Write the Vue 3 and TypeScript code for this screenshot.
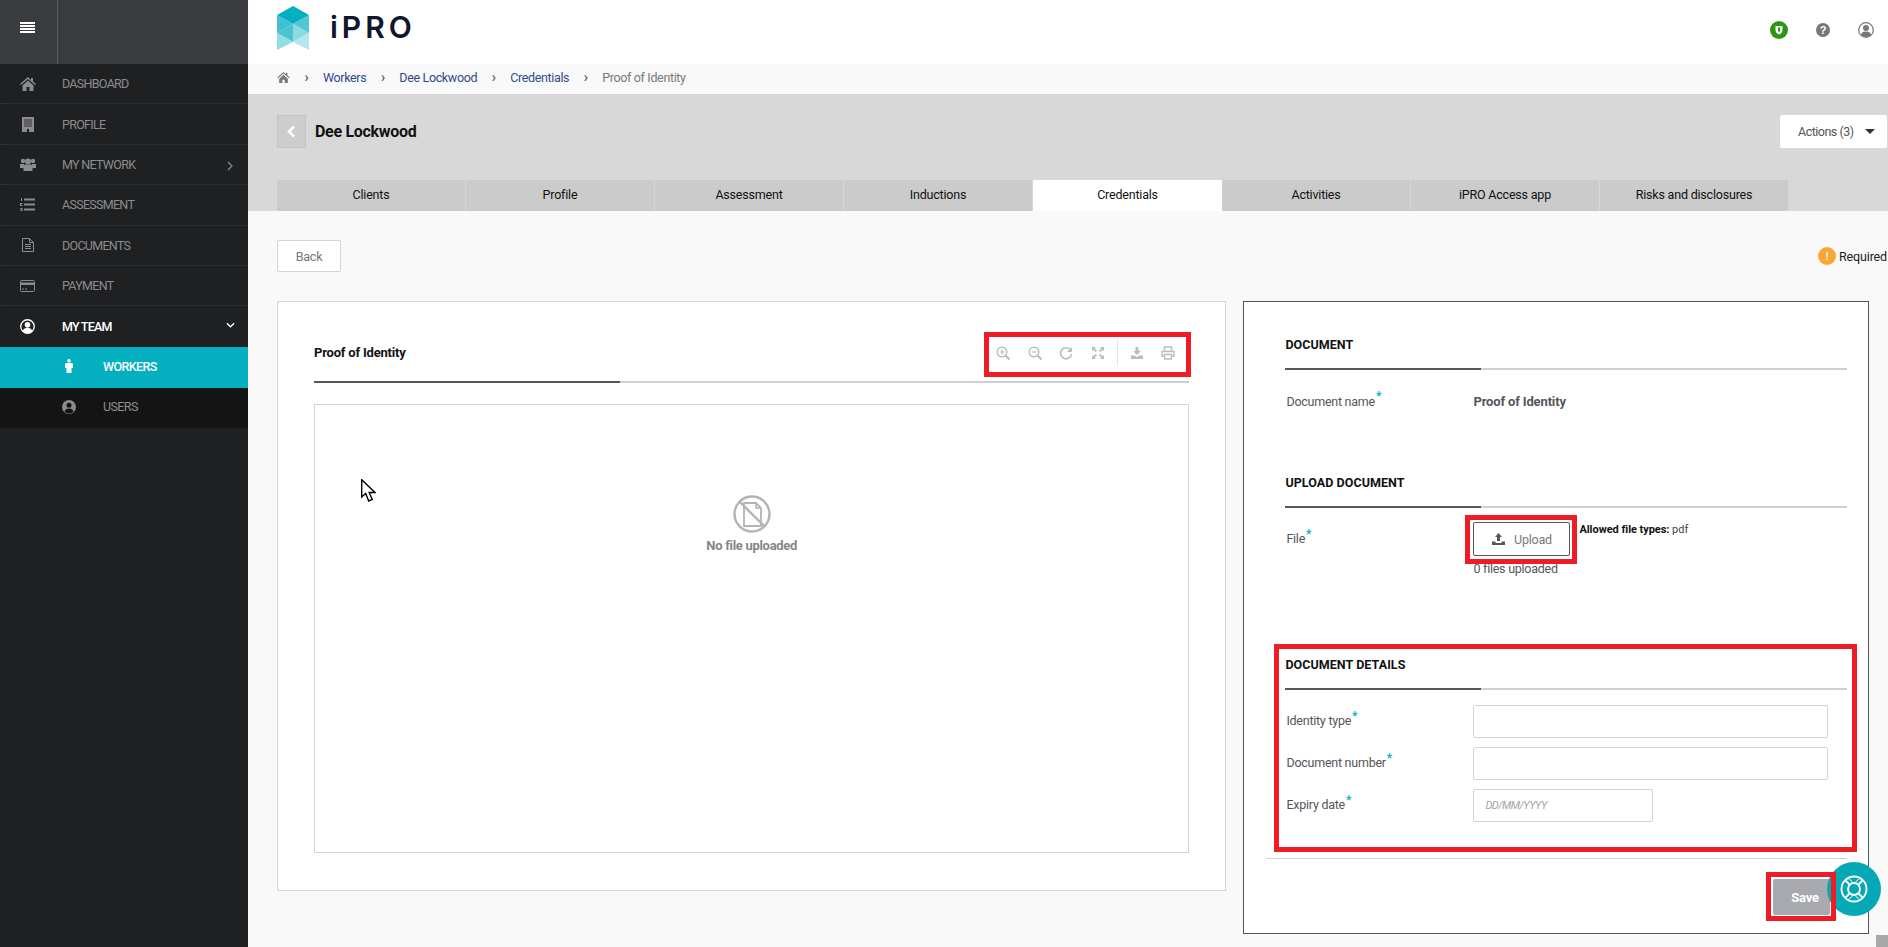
<script setup lang="ts">
const nav = [
  { label: 'DASHBOARD', icon: 'home' },
  { label: 'PROFILE', icon: 'profile' },
  { label: 'MY NETWORK', icon: 'network', arrow: 'right' },
  { label: 'ASSESSMENT', icon: 'list' },
  { label: 'DOCUMENTS', icon: 'doc' },
  { label: 'PAYMENT', icon: 'card' },
]
const tabs = ['Clients', 'Profile', 'Assessment', 'Inductions', 'Credentials', 'Activities', 'iPRO Access app', 'Risks and disclosures']
const crumbs = ['Workers', 'Dee Lockwood', 'Credentials']
</script>

<template>
  <div class="app">
    <aside class="side">
      <div class="side-top">
        <div class="burger"><i></i><i></i><i></i><i></i></div>
      </div>
      <div v-for="n in nav" :key="n.label" class="nav-row">
        <span class="nav-ico">
          <svg v-if="n.icon === 'home'" viewBox="0 0 16 14" width="16" height="14"><path d="M8 0 0 7l1 1 7-6 7 6 1-1-3-2.600V1h-2v2L8 0ZM2.500 8.500V14H6.500V10h3v4H13.500V8.500L8 3.500Z" fill="currentColor"/></svg>
          <svg v-else-if="n.icon === 'profile'" viewBox="0 0 12 15" width="12" height="15"><path d="M0 0h12v15H0Z" fill="currentColor"/><path d="M2 3h8M2 5h8M2 7h8M2 9h8" stroke="#1f2022" stroke-width=".8"/><path d="M5 12h2v3H5Z" fill="#1f2022"/></svg>
          <svg v-else-if="n.icon === 'network'" viewBox="0 0 16 13" width="16" height="13"><circle cx="3" cy="3" r="2.200" fill="currentColor"/><circle cx="13" cy="3" r="2.200" fill="currentColor"/><circle cx="8" cy="3.500" r="3" fill="currentColor"/><path d="M0 6h4v4H0ZM12 6h4v4h-4Z" fill="currentColor"/><path d="M3.500 8c0-1 1-1.500 2-1.500h5c1 0 2 .5 2 1.500v5h-9Z" fill="currentColor"/></svg>
          <svg v-else-if="n.icon === 'list'" viewBox="0 0 15 13" width="15" height="13"><path d="M4 1.500h11M4 6.500h11M4 11.500h11" stroke="currentColor" stroke-width="1.800"/><path d="M1 0h1v3H1ZM0 5h2.500v1H1v1h1.500v1H0ZM0 10h2.500v3H0v-.8h1.500v-.4H.6V11.200h.9v-.4H0Z" fill="currentColor"/></svg>
          <svg v-else-if="n.icon === 'doc'" viewBox="0 0 12 14" width="12" height="14"><path d="M.5.500h7l4 4v9H.5Z M7.500.5v4h4M3 6.500h6M3 8.500h6M3 10.500h6" fill="none" stroke="currentColor"/></svg>
          <svg v-else viewBox="0 0 15 12" width="15" height="12"><rect x=".5" y=".5" width="14" height="11" rx="1" fill="none" stroke="currentColor"/><path d="M1 2.500h13v2.500H1Z" fill="currentColor"/><path d="M2 9h2M5 9h2" stroke="currentColor"/></svg>
        </span>
        <span>{{ n.label }}</span>
        <svg v-if="n.arrow" class="nav-arrow" viewBox="0 0 6 10" width="6" height="10"><path d="m1 1 4 4-4 4" fill="none" stroke="currentColor" stroke-width="1.200"/></svg>
      </div>
      <div class="nav-row team">
        <span class="nav-ico">
          <svg viewBox="0 0 16 16" width="15" height="15"><circle cx="8" cy="8" r="7.200" fill="none" stroke="#fff" stroke-width="1.400"/><circle cx="8" cy="6.200" r="3" fill="#fff"/><path d="M3 13c.5-3 3-3.500 5-3.500s4.500.5 5 3.500a7 7 0 0 1-10 0Z" fill="#fff"/></svg>
        </span>
        <span>MY TEAM</span>
        <svg class="nav-arrow down" viewBox="0 0 10 6" width="9" height="6"><path d="m1 1 4 4 4-4" fill="none" stroke="#fff" stroke-width="1.500"/></svg>
      </div>
      <div class="sub-row active">
        <span class="sub-ico">
          <svg viewBox="0 0 8 14" width="8" height="14"><circle cx="4" cy="1.800" r="1.800" fill="#fff"/><path d="M1 4h6l1 1v4H6.500v5h-5V9H0V5Z" fill="#fff"/></svg>
        </span>
        <span>WORKERS</span>
      </div>
      <div class="sub-row">
        <span class="sub-ico">
          <svg viewBox="0 0 14 14" width="14" height="14"><circle cx="7" cy="7" r="7" fill="#8a8a8a"/><circle cx="7" cy="5.200" r="2.500" fill="#141415"/><path d="M2.500 11.500C3 9.500 5 8.500 7 8.500s4 1 4.500 3a6 6 0 0 1-9 0Z" fill="#141415"/></svg>
        </span>
        <span>USERS</span>
      </div>
    </aside>

    <main class="main">
      <header class="top">
        <svg class="logo" viewBox="0 0 32 44" width="32" height="44">
          <path d="M16 0 32 9 16 18 0 9Z" fill="#04afc0"/>
          <path d="M0 9 16 18 0 27Z" fill="#3fc1cf"/>
          <path d="M32 9 16 18 32 27Z" fill="#52c6d2"/>
          <path d="M0 27 16 18V36L0 27Z" fill="#4cc3d0"/>
          <path d="M16 18 32 27 16 36Z" fill="#8bd9e1"/>
          <path d="M0 27 16 36 0 44Z" fill="#93dde5"/>
          <path d="M32 27 16 36 32 44Z" fill="#b5e6eb"/>
        </svg>
        <span class="brand">iPRO</span>
        <div class="top-icons">
          <svg viewBox="0 0 18 18" width="18" height="18"><circle cx="9" cy="9" r="9" fill="#2c9610"/><path d="M5.500 5h7v4c0 2-1.500 3.500-3.500 4.500C7 12.500 5.500 11 5.500 9Z" fill="#fff"/><path d="M8 6.500h2V10l-1 1-1-1Z" fill="#2c9610"/></svg>
          <svg viewBox="0 0 14 14" width="14" height="14"><circle cx="7" cy="7" r="7" fill="#77787c"/><text x="7" y="11" text-anchor="middle" class="qm">?</text></svg>
          <svg viewBox="0 0 16 16" width="16" height="16"><circle cx="8" cy="8" r="7.300" fill="#fff" stroke="#77787c" stroke-width="1.200"/><circle cx="8" cy="6" r="3" fill="#77787c"/><path d="M3 13c.5-3 3-3.500 5-3.500s4.500.5 5 3.500a7 7 0 0 1-10 0Z" fill="#77787c"/></svg>
        </div>
      </header>

      <nav class="crumbs">
        <svg viewBox="0 0 16 14" width="13" height="11"><path d="M8 0 0 7l1 1 7-6 7 6 1-1-3-2.600V1h-2v2L8 0ZM2.500 8.500V14H6.500V10h3v4H13.500V8.500L8 3.500Z" fill="#77787c"/></svg>
        <template v-for="c in crumbs" :key="c">
          <span class="sep">›</span>
          <a>{{ c }}</a>
        </template>
        <span class="sep">›</span>
        <span class="cur">Proof of Identity</span>
      </nav>

      <section class="head">
        <div class="head-row">
          <button class="back-sq">
            <svg viewBox="0 0 9 13" width="9" height="13"><path d="M7 1.500 2 6.500l5 5" fill="none" stroke="#fff" stroke-width="2.600"/></svg>
          </button>
          <h1>Dee Lockwood</h1>
          <button class="actions">Actions (3)<i class="caret"></i></button>
        </div>
        <div class="tabs">
          <div v-for="t in tabs" :key="t" class="tab" :class="{ on: t === 'Credentials' }">{{ t }}</div>
        </div>
      </section>

      <section class="content">
        <div class="bar">
          <button class="back">Back</button>
          <div class="req"><span class="req-dot">!</span>Required</div>
        </div>
        <div class="panels">
          <div class="viewer-panel">
            <div class="viewer-head">
              <span class="viewer-title">Proof of Identity</span>
              <div class="tools">
                <svg viewBox="0 0 14 14" width="14" height="14"><circle cx="6" cy="6" r="4.800" fill="none" stroke="#bcbcbc" stroke-width="1.500"/><path d="m9.500 9.500 4 4" stroke="#bcbcbc" stroke-width="2"/><path d="M3.500 6h5M6 3.500v5" stroke="#bcbcbc" stroke-width="1.200"/></svg>
                <svg viewBox="0 0 14 14" width="14" height="14"><circle cx="6" cy="6" r="4.800" fill="none" stroke="#bcbcbc" stroke-width="1.500"/><path d="m9.500 9.500 4 4" stroke="#bcbcbc" stroke-width="2"/><path d="M3.500 6h5" stroke="#bcbcbc" stroke-width="1.200"/></svg>
                <svg viewBox="0 0 14 14" width="14" height="14"><path d="M11.500 4A5.500 5.500 0 1 0 12.500 8" fill="none" stroke="#bcbcbc" stroke-width="1.700"/><path d="M13 1v5H8Z" fill="#bcbcbc"/></svg>
                <svg viewBox="0 0 14 14" width="14" height="14"><path d="M1 1h4L3.700 2.300 6 4.600 4.600 6 2.300 3.700 1 5ZM13 1v4l-1.300-1.300L9.400 6 8 4.600l2.300-2.300L9 1ZM1 13V9l1.300 1.300L4.600 8 6 9.400l-2.300 2.300L5 13ZM13 13H9l1.300-1.300L8 9.400 9.400 8l2.300 2.300L13 9Z" fill="#bcbcbc"/></svg>
                <span class="tool-sep"></span>
                <svg viewBox="0 0 14 14" width="14" height="14"><path d="M5.500 1h3v4H11L7 9 3 5h2.500ZM1 9.500h3.500L7 11l2.500-1.500H13V13H1Z" fill="#bcbcbc"/></svg>
                <svg viewBox="0 0 14 14" width="14" height="14"><path d="M3.500 5V1h7v4M3.500 10H1V5.500h12V10h-2.500M3.500 8.500h7v4.500h-7Z" fill="none" stroke="#bcbcbc" stroke-width="1.400"/></svg>
              </div>
            </div>
            <div class="rule"><b class="rule-dark wide"></b></div>
            <div class="viewer">
              <svg viewBox="0 0 38 38" width="38" height="38"><circle cx="19" cy="19" r="17.500" fill="none" stroke="#b4b4b4" stroke-width="2.400"/><path d="M11 8h12l5 5v18H11Z" fill="none" stroke="#b4b4b4" stroke-width="1.800"/><path d="M23 8v5h5" fill="none" stroke="#b4b4b4" stroke-width="1.500"/><path d="M7 7l24 24" stroke="#b4b4b4" stroke-width="2.400"/></svg>
              <span class="none">No file uploaded</span>
            </div>
          </div>

          <form class="form-panel">
            <div class="form-body">
              <h2>DOCUMENT</h2>
              <div class="rule"><b class="rule-dark"></b></div>
              <div class="row doc-row">
                <label>Document name<sup>*</sup></label>
                <strong>Proof of Identity</strong>
              </div>

              <h2 class="up-h">UPLOAD DOCUMENT</h2>
              <div class="rule"><b class="rule-dark"></b></div>
              <div class="up-row">
                <label>File<sup>*</sup></label>
                <button type="button" class="upload">
                  <svg viewBox="0 0 13 12" width="13" height="12"><path d="M6.500 0 10 4H8v4H5V4H3ZM0 8.500h3.500V10h6V8.500H13V12H0Z" fill="#55575c"/></svg>
                  Upload
                </button>
                <span class="types"><b>Allowed file types:</b> pdf</span>
              </div>
              <div class="files">0 files uploaded</div>

              <h2 class="det-h">DOCUMENT DETAILS</h2>
              <div class="rule"><b class="rule-dark"></b></div>
              <div class="fields">
                <label>Identity type<sup>*</sup></label><div class="inp"></div>
                <label>Document number<sup>*</sup></label><div class="inp"></div>
                <label>Expiry date<sup>*</sup></label><div class="inp date">DD/MM/YYYY</div>
              </div>
            </div>
            <div class="foot">
              <button type="button" class="save">Save</button>
            </div>
          </form>
        </div>
      </section>
    </main>

    <div class="mark m-tools"></div>
    <div class="mark m-upload"></div>
    <div class="mark m-details"></div>
    <div class="mark m-save"></div>

    <div class="help">
      <svg viewBox="0 0 30 30" width="30" height="30"><g fill="none" stroke="#fff" stroke-width="1.800"><circle cx="15" cy="15" r="12.500"/><circle cx="15" cy="15" r="6"/><path d="m6 6 5 5M24 6l-5 5M6 24l5-5M24 24l-5-5"/><path d="M9 4l4.500 4M21 4l-4.500 4M9 26l4.500-4M21 26l-4.500-4" stroke-width="1"/></g></svg>
    </div>
    <div class="corner"></div>

    <svg class="cursor" viewBox="0 0 15 24" width="15" height="24"><path d="M.7.700V18l4-3.500 3 7.500 3.500-1.500-3-7H14Z" fill="#fff" stroke="#000" stroke-width="1.400"/></svg>
  </div>
</template>

<style>
html, body { margin: 0; height: 100%; overflow: hidden; }
</style>

<style scoped>
.app {
  position: relative;
  display: flex;
  height: 947px;
  overflow: hidden;
  font-family: Roboto, "Liberation Sans", sans-serif;
  font-size: 12.500px;
  letter-spacing: -.25px;
  color: #444;
  background: repeating-conic-gradient(#fdfdfd 0 25%, #f5f5f5 0 50%) 0 0 / 2px 2px;
}
button { font-family: inherit; letter-spacing: inherit; }

.side { width: 248px; flex: none; background: #1f2022; }
.side-top { height: 64px; background: #3a3b3f; display: flex; }
.burger {
  width: 55px; border-right: 1px solid #5c5d61;
  display: flex; flex-direction: column; justify-content: center; align-items: center; gap: 1px;
  padding-right: 2px; padding-bottom: 10px; box-sizing: content-box;
  height: 54px;
}
.burger i { width: 15px; height: 2px; background: #fff; display: block; }
.nav-row {
  height: 40.400px; box-sizing: border-box;
  display: flex; align-items: center;
  color: #8b8c8e; font-size: 12.500px; letter-spacing: -.7px;
  border-bottom: 1px dotted #38393b;
  position: relative;
}
.nav-ico { width: 62px; flex: none; display: flex; justify-content: center; padding-right: 7px; box-sizing: border-box; }
.nav-arrow { position: absolute; right: 15px; top: 16px; }
.team { color: #fff; font-weight: 500; border-bottom: 0; letter-spacing: -.8px; }
.team .down { right: 13px; top: 16px; }
.sub-row {
  height: 40.500px; display: flex; align-items: center; box-sizing: border-box; padding-bottom: 2px;
  color: #8d8e90; background: #141415; font-size: 12.500px; letter-spacing: -.6px;
}
.sub-row.active { background: #04afc0; color: #fff; font-weight: 500; height: 41px; }
.sub-ico { width: 103px; flex: none; display: flex; justify-content: center; padding-left: 48px; padding-right: 13px; box-sizing: border-box; }

.main { width: 1640px; flex: none; display: flex; flex-direction: column; }
.top { height: 64px; background: #fff; display: flex; align-items: center; padding-left: 29px; }
.logo { margin-top: -8px; margin-right: 21px; }
.brand {
  font-family: Inter, sans-serif; font-size: 30px; font-weight: 600;
  letter-spacing: 4px; color: #12162b; margin-top: -10px;
}
.top-icons { margin-left: auto; display: flex; align-items: center; gap: 28px; padding-right: 14px; margin-top: -5px; }
.qm { font: 700 11px "Liberation Sans", sans-serif; fill: #fff; }

.crumbs { height: 30px; display: flex; align-items: center; padding: 0 0 3px 29px; box-sizing: border-box; font-size: 12.500px; letter-spacing: -.35px; }
.crumbs a { color: #2f4a8a; }
.crumbs .sep { color: #444; width: 33px; text-align: center; font-size: 14px; margin: 0 0 2px; }
.crumbs svg { margin-right: 0; }
.crumbs .cur { color: #77787c; }

.head { height: 117px; background: #d8d8d8; padding-left: 29px; box-sizing: border-box; display: flex; flex-direction: column; }
.head-row { display: flex; align-items: center; height: 33px; margin-top: 21px; }
.back-sq {
  width: 29px; height: 33px; padding: 0; background: #cdcdcd; border: 1px solid #c4c4c4;
  display: flex; align-items: center; justify-content: center; margin-right: 9px;
}
h1 { margin: 0; font-size: 16px; font-weight: 700; color: #111; letter-spacing: -.3px; }
.actions {
  margin-left: auto; margin-right: 1px; width: 107px; height: 33px; border: 0; background: #fff; border-radius: 2px;
  font-size: 12.500px; letter-spacing: -.5px; color: #555; display: flex; align-items: center; padding: 0 0 0 18px;
}
.caret { margin-left: 11px; border: 5px solid transparent; border-top: 5px solid #333; border-bottom: 0; }
.tabs { display: flex; margin-top: 32px; height: 31px; }
.tab {
  width: 189px; box-sizing: border-box; background: #cbcbcb; color: #111; padding-bottom: 2px;
  display: flex; align-items: center; justify-content: center; font-size: 12.500px; letter-spacing: -.2px;
  border-right: 1px solid #d6d6d6;
}
.tab.on { background: #fff; border-right: 0; }

.content { padding: 29px 19px 0 29px; }
.bar { display: flex; justify-content: space-between; align-items: center; height: 32px; margin-bottom: 29px; margin-right: -19px; }
.back {
  width: 64px; height: 32px; background: #fff; border: 1px solid #d4d4d6; border-radius: 2px;
  color: #77787c; font-size: 12.500px; padding: 0;
}
.req { display: flex; align-items: center; gap: 3px; color: #222; font-size: 12.500px; margin-right: 1px; letter-spacing: -.15px; }
.req-dot {
  width: 18px; height: 18px; border-radius: 50%; background: #f8a832; color: #fff; font-size: 10px; font-weight: 700;
  display: flex; align-items: center; justify-content: center;
}

.panels { display: flex; gap: 17px; align-items: flex-start; }
.viewer-panel {
  width: 950px; height: 590px; box-sizing: border-box; background: #fff; border: 1px solid #d4d4d6;
  padding: 0 36px 0 36px;
}
.viewer-head { display: flex; justify-content: space-between; align-items: center; height: 79px; padding-top: 22px; box-sizing: border-box; }
.viewer-title { font-size: 13px; font-weight: 700; color: #111; letter-spacing: -.2px; }
.tools { display: flex; align-items: center; gap: 17.500px; padding-right: 14px; margin-top: 0; }
.tool-sep { width: 1px; height: 27px; background: #e6e6e6; margin: 0 -5.500px; }
.rule { height: 2px; background: #d0d0d2; }
.rule-dark { display: block; width: 196px; height: 2px; background: #55565c; }
.rule-dark.wide { width: 306px; }
.viewer {
  margin-top: 21px; height: 449px; box-sizing: border-box; border: 1px solid #d4d4d6;
  display: flex; flex-direction: column; align-items: center; padding-top: 90px;
}
.none { font-size: 13px; font-weight: 700; color: #85868a; margin-top: 5px; letter-spacing: -.3px; }

.form-panel {
  width: 626px; height: 633px; box-sizing: border-box; background: #fff; border: 1px solid #55565c;
  display: flex; flex-direction: column;
}
.form-body { padding: 32px 21px 0 41px; height: 556px; box-sizing: border-box; border-bottom: 0; }
h2 { margin: 0 0 12px; height: 22px; line-height: 22px; font-size: 12.500px; font-weight: 700; color: #111; letter-spacing: .05px; }
label { color: #55565c; font-size: 12.500px; }
sup { color: #04afc0; font-size: 12px; line-height: 0; margin-left: 1px; font-weight: 700; }
.row { display: flex; align-items: center; }
.doc-row { height: 62px; }
.doc-row label { width: 188px; padding-left: 1px; box-sizing: border-box; }
.doc-row strong { color: #55565c; font-size: 13px; font-weight: 700; letter-spacing: -.15px; }
.up-h { margin-top: 40px; }
.up-row { display: flex; align-items: flex-start; margin-top: 14px; position: relative; }
.up-row label { width: 188px; padding-left: 1px; box-sizing: border-box; line-height: 34px; }
.upload {
  width: 97px; height: 34px; box-sizing: border-box; background: #fff; border: 1px solid #55565c; border-radius: 2px;
  display: flex; align-items: center; justify-content: center; gap: 9px; color: #77787c; font-size: 12.500px; padding: 0;
}
.types { font-size: 11px; color: #444; margin-left: 9px; margin-top: 1px; letter-spacing: -.05px; }
.types b { color: #111; }
.files { margin-left: 188px; margin-top: 5px; font-size: 12.500px; color: #55565c; line-height: 16px; }
.det-h { margin-top: 77px; }
.fields {
  display: grid; grid-template-columns: 188px 355px; grid-auto-rows: 33px; row-gap: 9px; margin-top: 15px;
  align-items: center;
}
.fields label { padding-left: 1px; margin-top: -2px; }
.inp { height: 33px; box-sizing: border-box; border: 1px solid #d4d4d6; border-radius: 2px; }
.inp.date {
  width: 180px; font-style: italic; color: #a5a6a9; font-size: 11px; letter-spacing: -.6px;
  display: flex; align-items: center; padding-left: 11px;
}
.foot {
  margin: 0 21px 0 22px; border-top: 1px solid #d4d4d6; flex: 1; position: relative;
  display: flex; justify-content: flex-end; align-items: flex-start;
}
.save {
  width: 57px; height: 36px; border: 0; background: #a9aab0; color: #fff; font-weight: 700; font-size: 13px;
  border-radius: 2px; margin-top: 20px; margin-right: 17px; padding: 0 0 0 7px;
}

.mark { position: absolute; border: 5px solid #ee1c25; box-sizing: border-box; pointer-events: none; }
.m-tools { left: 984px; top: 332px; width: 207px; height: 45px; }
.m-upload { left: 1465px; top: 515px; width: 112px; height: 49px; }
.m-details { left: 1274px; top: 644px; width: 583px; height: 208px; }
.m-save { left: 1766px; top: 872px; width: 70px; height: 49px; }

.help {
  position: absolute; left: 1827px; top: 862px; width: 54px; height: 54px; border-radius: 50%;
  background: #04a9b5; display: flex; align-items: center; justify-content: center;
}
.m-save { z-index: 2; }
.corner { position: absolute; right: 0; bottom: 0; width: 12px; height: 12px; background: #a9a9a9; }
.cursor { position: absolute; left: 361px; top: 479px; }
</style>
